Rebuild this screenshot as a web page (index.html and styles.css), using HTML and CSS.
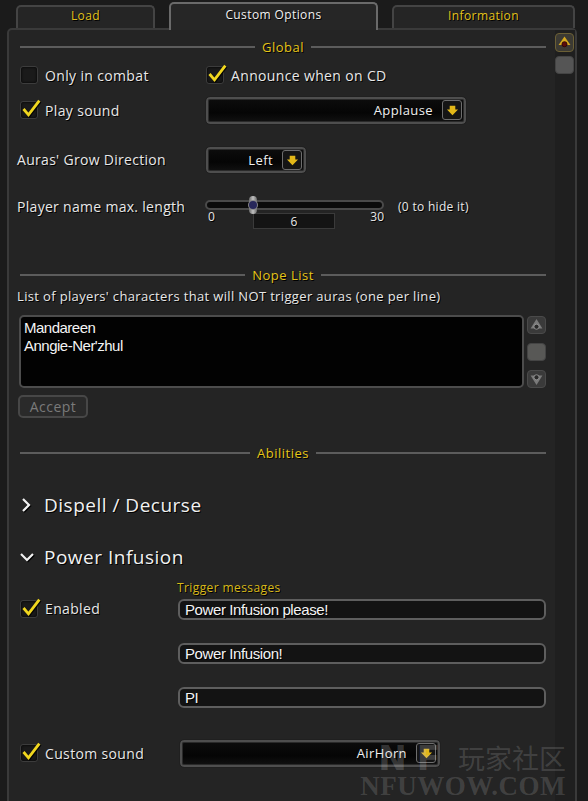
FILE: index.html
```html
<!DOCTYPE html>
<html lang="en">
<head>
    <meta charset="UTF-8">
    <meta name="viewport" content="width=device-width, initial-scale=1.0">
    <title>Custom Options</title>
    <link rel="stylesheet" href="styles.css">
</head>
<body>
    <div class="tabs">
        <div class="tab">Load</div>
        <div class="tab active">Custom Options</div>
        <div class="tab">Information</div>
    </div>

    <div class="panel">
        <div class="content">
            <div class="heading"><span>Global</span></div>

            <div class="row r1">
                <label class="check"><span class="box"></span>Only in combat</label>
                <label class="check"><span class="box on"><svg viewBox="0 0 24 24"><path d="M3 12 L9 19 L22 2"/></svg></span>Announce when on CD</label>
            </div>

            <div class="row r2">
                <label class="check"><span class="box on"><svg viewBox="0 0 24 24"><path d="M3 12 L9 19 L22 2"/></svg></span>Play sound</label>
                <div class="dropdown wide">
                    <span class="val">Applause</span>
                    <span class="arrow"><svg viewBox="0 0 14 14"><path d="M4 2 H10 V6 H13 L7 12 L1 6 H4 Z"/></svg></span>
                </div>
            </div>

            <div class="row r3">
                <span class="label">Auras' Grow Direction</span>
                <div class="dropdown small">
                    <span class="val">Left</span>
                    <span class="arrow"><svg viewBox="0 0 14 14"><path d="M4 2 H10 V6 H13 L7 12 L1 6 H4 Z"/></svg></span>
                </div>
            </div>

            <div class="row r4">
                <span class="label">Player name max. length</span>
                <div class="slider">
                    <div class="track"><span class="thumb"></span></div>
                    <div class="scale">
                        <span class="min">0</span>
                        <span class="value">6</span>
                        <span class="max">30</span>
                    </div>
                </div>
                <span class="hint">(0 to hide it)</span>
            </div>

            <div class="heading nope"><span>Nope List</span></div>
            <p class="desc">List of players' characters that will NOT trigger auras (one per line)</p>

            <div class="listbox">
                <div class="textarea">Mandareen<br>Anngie-Ner'zhul</div>
                <div class="minibar">
                    <span class="mbtn"><svg viewBox="0 0 20 18"><path d="M10 2 L17 13 H3 Z"/><circle cx="10" cy="11" r="3"/></svg></span>
                    <span class="mthumb"></span>
                    <span class="mbtn"><svg viewBox="0 0 20 18"><path d="M10 16 L17 5 H3 Z"/><circle cx="10" cy="7" r="3"/></svg></span>
                </div>
            </div>
            <button class="accept">Accept</button>

            <div class="heading abil"><span>Abilities</span></div>

            <div class="group closed">
                <svg class="chev" viewBox="0 0 12 16"><path d="M3 2 L9 8 L3 14"/></svg>
                Dispell / Decurse
            </div>

            <div class="group open">
                <svg class="chev" viewBox="0 0 16 12"><path d="M2 3 L8 9 L14 3"/></svg>
                Power Infusion
            </div>

            <div class="ability">
                <label class="check"><span class="box on"><svg viewBox="0 0 24 24"><path d="M3 12 L9 19 L22 2"/></svg></span>Enabled</label>
                <div class="messages">
                    <span class="sub">Trigger messages</span>
                    <div class="input">Power Infusion please!</div>
                    <div class="input">Power Infusion!</div>
                    <div class="input">PI</div>
                </div>
            </div>

            <div class="row r5">
                <label class="check"><span class="box on"><svg viewBox="0 0 24 24"><path d="M3 12 L9 19 L22 2"/></svg></span>Custom sound</label>
                <div class="dropdown wide">
                    <span class="val">AirHorn</span>
                    <span class="arrow"><svg viewBox="0 0 14 14"><path d="M4 2 H10 V6 H13 L7 12 L1 6 H4 Z"/></svg></span>
                </div>
            </div>
        </div>

        <div class="scroll">
            <span class="up"><svg viewBox="0 0 20 20"><path d="M10 3 L17 13 H3 Z"/><circle cx="10" cy="12" r="3"/></svg></span>
            <span class="sthumb"></span>
        </div>
    </div>

    <div class="watermark">
        <div class="wm-top"><span class="logo">NF</span>玩家社区</div>
        <div class="wm-bottom">NFUWOW.COM</div>
    </div>
</body>
</html>
```

FILE: styles.css
```css
html,body{
    height: 100%;
}
body{
    margin: 0;
    background: #1b1b1b;
    overflow: hidden;
    position: relative;
    font-family: "Open Sans", "DejaVu Sans", sans-serif;
    color: #e8e8e8;
    text-shadow: 1px 1px 0 #000;
}

/* tabs */
.tabs{
    display: flex;
    align-items: flex-end;
    gap: 14px;
    height: 28px;
    padding-left: 16px;
}
.tab{
    height: 23px;
    box-sizing: border-box;
    border: 2px solid #444;
    border-bottom: none;
    border-radius: 5px 5px 0 0;
    background: #252525;
    color: #e2c21c;
    font-size: 12px;
    line-height: 17px;
    text-align: center;
    letter-spacing: 0.4px;
}
.tab:nth-child(1){ width: 139px; }
.tab:nth-child(2){ width: 209px; }
.tab:nth-child(3){ width: 183px; }
.tab.active{
    height: 28px;
    border-color: #6a6a6a;
    background: #262626;
    color: #f0f0f0;
    line-height: 22px;
    margin-bottom: -2px;
    position: relative;
    z-index: 1;
}

/* panel */
.panel{
    display: flex;
    width: 570px;
    height: 790px;
    box-sizing: border-box;
    margin-left: 7px;
    border: 2px solid #3a3a3a;
    border-radius: 5px 5px 0 0;
    background: #242424;
}
.content{
    flex: 1;
    padding: 8px 9px 0 8px;
}
.scroll{
    width: 20px;
    background: #1f1f1f;
    padding-top: 3px;
    display: flex;
    flex-direction: column;
    gap: 4px;
}
.scroll .up{
    display: block;
    width: 19px;
    height: 19px;
    box-sizing: border-box;
    border: 1px solid #6b5f35;
    border-radius: 4px;
    background: #3c3a33;
}
.scroll .up svg{
    width: 17px;
    height: 17px;
    display: block;
}
.scroll .up path{ fill: #d6a81e; }
.scroll .up circle{ fill: #5a0d0d; stroke: #2a0505; }
.scroll .sthumb{
    display: block;
    width: 19px;
    height: 18px;
    border-radius: 4px;
    background: #555;
    border: 1px solid #444;
    box-sizing: border-box;
}

/* section headings */
.heading{
    display: flex;
    align-items: center;
    gap: 7px;
    height: 18px;
    margin: 0 0 0 3px;
}
.heading::before,
.heading::after{
    content: "";
    flex: 1;
    height: 2px;
    background: #5c5c5c;
}
.heading span{
    color: #e6c51a;
    font-size: 13px;
    letter-spacing: 0.5px;
}
.heading.nope{ margin-top: 36px; }
.heading.abil{ margin-top: 26px; }

/* rows */
.row{
    display: grid;
    grid-template-columns: 189px 1fr;
    align-items: center;
}
.r1{ height: 22px; margin-top: 8px; }
.r1 .check + .check{ padding-left: 0; }
.r2{ height: 28px; margin-top: 10px; }
.r3{ height: 26px; margin-top: 23px; }
.r4{
    grid-template-columns: 188px 179px 1fr;
    align-items: start;
    height: 33px;
    margin-top: 24px;
}
.r5{
    grid-template-columns: 163px 1fr;
    height: 28px;
    margin-top: 31px;
}
.label{
    font-size: 14px;
    letter-spacing: 0.3px;
    line-height: 20px;
}

/* checkboxes */
.check{
    display: flex;
    align-items: center;
    gap: 7px;
    padding-left: 3px;
    font-size: 14px;
    letter-spacing: 0.35px;
}
.box{
    position: relative;
    width: 18px;
    height: 18px;
    box-sizing: border-box;
    border: 1px solid #3c3c3c;
    border-radius: 3px;
    background: #1a1a1a;
    box-shadow: inset 0 0 3px #000;
}
.box svg{
    position: absolute;
    left: 0;
    top: -3px;
    width: 20px;
    height: 20px;
    overflow: visible;
}
.box svg path{
    fill: none;
    stroke: #f1d71f;
    stroke-width: 3.4;
    stroke-linejoin: miter;
    filter: drop-shadow(1px 1px 0 #000);
}

/* dropdowns */
.dropdown{
    display: flex;
    align-items: center;
    justify-content: flex-end;
    height: 27px;
    box-sizing: border-box;
    border: 2px solid #4e4e4e;
    outline: 1px solid #202020;
    border-radius: 4px;
    background: linear-gradient(#0c0c0c, #050505 60%, #111);
    box-shadow: inset 0 0 0 1px #2a2a2a;
    padding-right: 2px;
}
.dropdown.wide{ width: 260px; }
.dropdown.small{ width: 100px; height: 26px; }
.dropdown .val{
    font-size: 13px;
    letter-spacing: 0.4px;
    color: #f0f0f0;
    margin-right: 9px;
}
.arrow{
    width: 20px;
    height: 20px;
    box-sizing: border-box;
    border: 1px solid #6d6d6d;
    border-radius: 3px;
    background: #151515;
    display: flex;
    align-items: center;
    justify-content: center;
}
.arrow svg{
    width: 13px;
    height: 13px;
}
.arrow path{ fill: #e2b718; }

/* slider */
.slider{
    padding-top: 3px;
}
.track{
    position: relative;
    height: 10px;
    box-sizing: border-box;
    border: 2px solid #4a4a4a;
    border-radius: 5px;
    background: #0b0b0b;
}
.thumb{
    position: absolute;
    left: 42px;
    top: -6px;
    width: 8px;
    height: 18px;
    border-radius: 4px;
    background: linear-gradient(90deg, #6b6b6b, #c0c0c0, #6b6b6b);
}
.thumb::after{
    content: "";
    position: absolute;
    left: 0;
    top: 5px;
    width: 8px;
    height: 8px;
    border-radius: 50%;
    background: #27275a;
    box-shadow: 0 0 0 1px #888;
}
.scale{
    display: flex;
    align-items: flex-start;
    font-size: 12px;
    line-height: 14px;
}
.scale .min{ width: 48px; padding-left: 3px; box-sizing: border-box; }
.scale .value{
    width: 82px;
    height: 16px;
    box-sizing: border-box;
    margin-top: 3px;
    border: 1px solid #3a3a3a;
    background: #141414;
    text-align: center;
    font-size: 12px;
    line-height: 15px;
}
.scale .max{ margin-left: auto; }
.hint{
    font-size: 12px;
    letter-spacing: 0.3px;
    line-height: 20px;
    padding-left: 14px;
}

/* nope list */
.desc{
    margin: 3px 0 0 0;
    height: 18px;
    font-size: 13px;
    letter-spacing: 0.35px;
    line-height: 18px;
}
.listbox{
    display: flex;
    gap: 3px;
    margin-top: 10px;
    margin-left: 2px;
}
.textarea{
    width: 505px;
    height: 73px;
    box-sizing: border-box;
    border: 2px solid #4c4c4c;
    border-radius: 5px;
    background: #020202;
    padding: 2px 0 0 3px;
    font-family: "Liberation Sans", Arial, sans-serif;
    font-size: 15px;
    line-height: 18px;
    letter-spacing: -0.5px;
    color: #f4f4f4;
}
.minibar{
    display: flex;
    flex-direction: column;
    justify-content: space-between;
    width: 19px;
    padding: 1px 0 0;
}
.mbtn{
    display: block;
    width: 19px;
    height: 18px;
    box-sizing: border-box;
    border: 1px solid #4a4a4a;
    border-radius: 4px;
    background: #3a3a3a;
}
.mbtn svg{ width: 17px; height: 16px; display: block; }
.mbtn path{ fill: #7a7a7a; }
.mbtn circle{ fill: #2a2a2a; stroke: #9a9a9a; stroke-width: 1; }
.mthumb{
    display: block;
    width: 19px;
    height: 18px;
    border-radius: 4px;
    background: #585856;
    border: 1px solid #444;
    box-sizing: border-box;
}
.accept{
    display: block;
    margin: 7px 0 0 1px;
    width: 70px;
    height: 23px;
    border: 2px solid #474747;
    border-radius: 5px;
    background: #2a2a2a;
    color: #7a7a7a;
    font-family: "Open Sans", "DejaVu Sans", sans-serif;
    font-size: 14px;
    letter-spacing: 0.5px;
    padding: 0;
    text-shadow: none;
}

/* ability groups */
.group{
    display: flex;
    align-items: center;
    height: 26px;
    font-size: 19px;
    letter-spacing: 0.5px;
    color: #f2f2f2;
}
.group.closed{ margin-top: 30px; }
.group.open{ margin-top: 26px; }
.chev{
    fill: none;
    stroke: #f2f2f2;
    stroke-width: 2.2;
    filter: drop-shadow(1px 1px 0 #000);
}
.closed .chev{ width: 12px; height: 16px; margin: 0 12px 0 3px; }
.open .chev{ width: 16px; height: 12px; margin: 0 9px 0 2px; }

.ability{
    display: grid;
    grid-template-columns: 160px 1fr;
    margin-top: 11px;
}
.ability .check{
    align-self: start;
    margin-top: 18px;
}
.messages{
    display: flex;
    flex-direction: column;
    gap: 23px;
}
.sub{
    color: #d9b919;
    font-size: 12px;
    letter-spacing: 0.4px;
    line-height: 14px;
    margin-bottom: -19px;
}
.input{
    height: 21px;
    box-sizing: border-box;
    border: 2px solid #5e5e5e;
    border-radius: 6px;
    background: #131313;
    padding-left: 5px;
    font-family: "Liberation Sans", Arial, sans-serif;
    font-size: 15px;
    letter-spacing: -0.4px;
    line-height: 17px;
    color: #f4f4f4;
    margin-left: 1px;
}

/* watermark */
.watermark{
    position: absolute;
    right: 22px;
    bottom: 2px;
    color: rgba(190, 190, 190, 0.2);
    text-shadow: none;
    text-align: right;
    pointer-events: none;
}
.wm-top{
    display: flex;
    align-items: center;
    justify-content: flex-end;
    gap: 8px;
    font-family: "Noto Sans CJK SC", sans-serif;
    font-size: 27px;
    line-height: 30px;
}
.logo{
    font-family: "DejaVu Sans", sans-serif;
    font-weight: bold;
    font-size: 34px;
    letter-spacing: 10px;
    color: rgba(200, 200, 200, 0.24);
}
.wm-bottom{
    font-family: "Liberation Serif", serif;
    font-weight: bold;
    font-size: 27px;
    line-height: 26px;
    letter-spacing: 0.5px;
}
```
